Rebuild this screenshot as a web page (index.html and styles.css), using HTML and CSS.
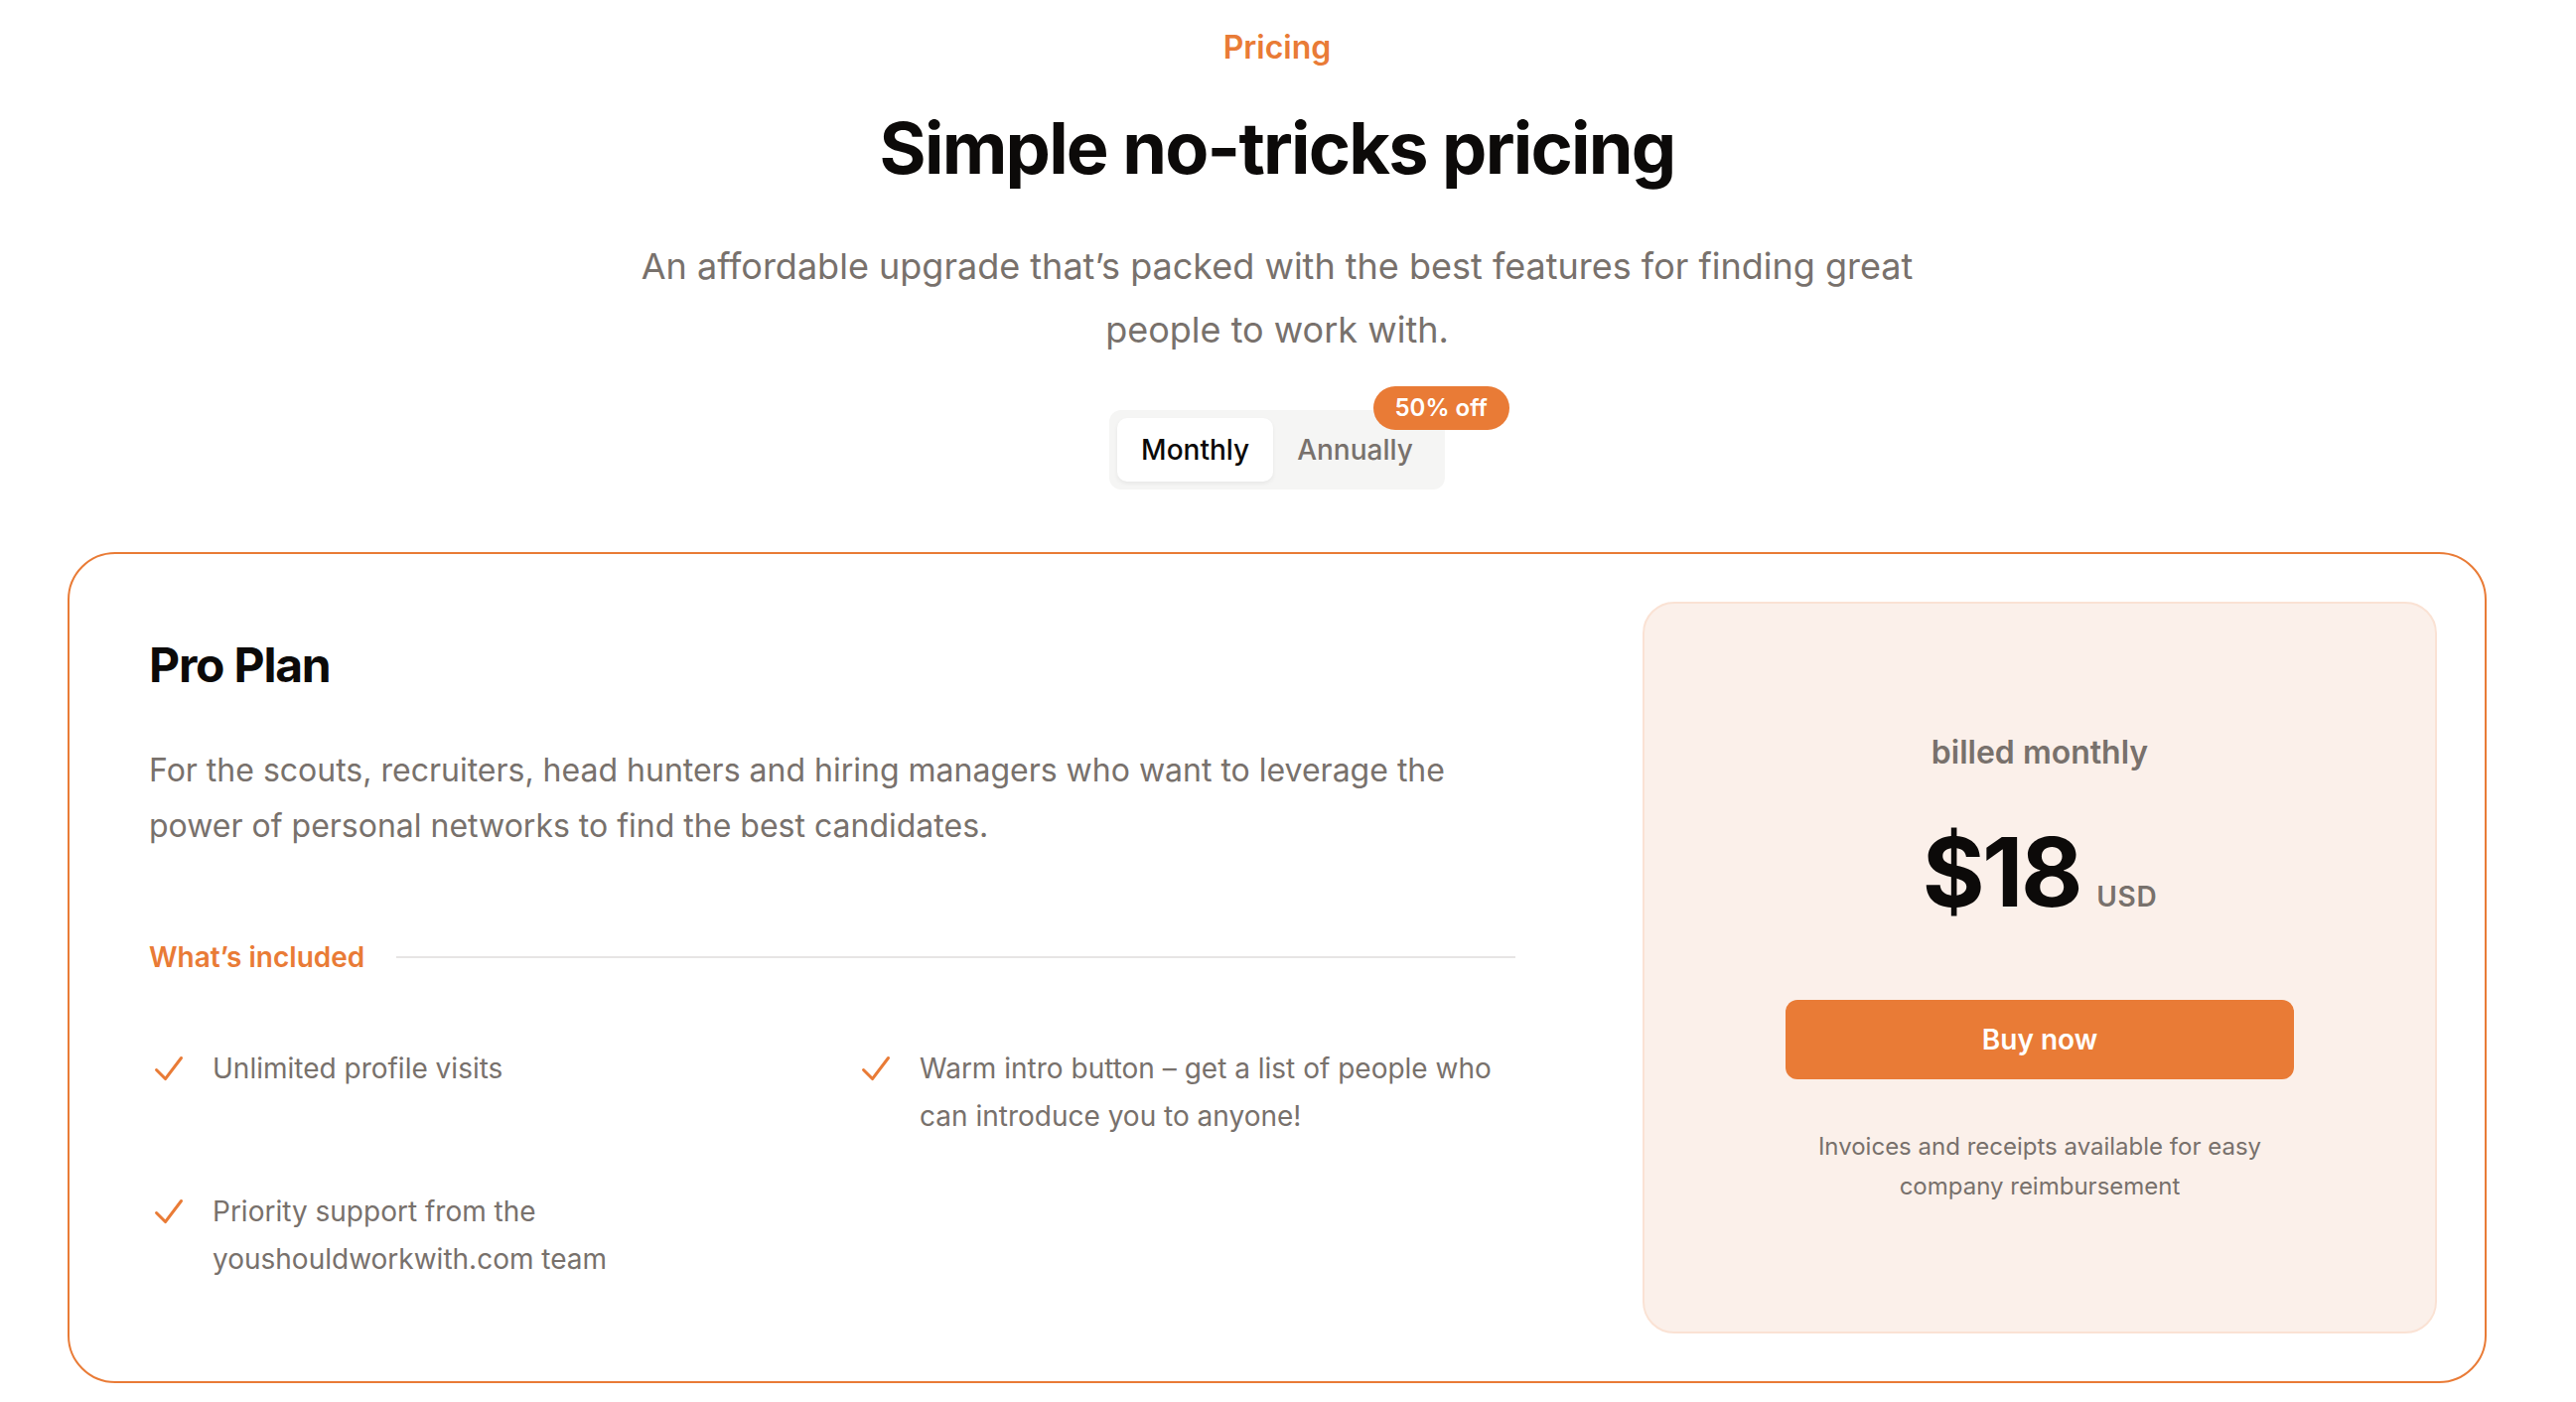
FILE: index.html
```html
<!DOCTYPE html>
<html lang="en">
<head>
<meta charset="utf-8">
<title>Pricing</title>
<link rel="stylesheet" href="styles.css">
</head>
<body>
<main class="page">
  <section class="hero">
    <p class="eyebrow">Pricing</p>
    <h1 class="title">Simple no-tricks pricing</h1>
    <p class="lead">An affordable upgrade that’s packed with the best features for finding great people to work with.</p>
    <div class="toggle-wrap">
      <div class="toggle">
        <span class="opt active">Monthly</span>
        <span class="opt">Annually</span>
        <span class="badge">50% off</span>
      </div>
    </div>
  </section>

  <section class="card">
    <div class="plan">
      <h2 class="plan-name">Pro Plan</h2>
      <p class="plan-desc">For the scouts, recruiters, head hunters and hiring managers who want to leverage the power of personal networks to find the best candidates.</p>
      <div class="included">
        <h3 class="included-label">What’s included</h3>
        <div class="included-line"></div>
      </div>
      <ul class="features">
        <li class="feature">
          <svg class="check" viewBox="0 0 20 20" fill="currentColor" aria-hidden="true"><path fill-rule="evenodd" d="M16.704 4.153a.75.75 0 01.143 1.052l-8 10.5a.75.75 0 01-1.127.075l-4.5-4.5a.75.75 0 011.06-1.06l3.894 3.893 7.48-9.817a.75.75 0 011.05-.143z" clip-rule="evenodd"/></svg>
          <span>Unlimited profile visits</span>
        </li>
        <li class="feature">
          <svg class="check" viewBox="0 0 20 20" fill="currentColor" aria-hidden="true"><path fill-rule="evenodd" d="M16.704 4.153a.75.75 0 01.143 1.052l-8 10.5a.75.75 0 01-1.127.075l-4.5-4.5a.75.75 0 011.06-1.06l3.894 3.893 7.48-9.817a.75.75 0 011.05-.143z" clip-rule="evenodd"/></svg>
          <span>Warm intro button – get a list of people who can introduce you to anyone!</span>
        </li>
        <li class="feature">
          <svg class="check" viewBox="0 0 20 20" fill="currentColor" aria-hidden="true"><path fill-rule="evenodd" d="M16.704 4.153a.75.75 0 01.143 1.052l-8 10.5a.75.75 0 01-1.127.075l-4.5-4.5a.75.75 0 011.06-1.06l3.894 3.893 7.48-9.817a.75.75 0 011.05-.143z" clip-rule="evenodd"/></svg>
          <span>Priority support from the youshouldworkwith.com team</span>
        </li>
      </ul>
    </div>
    <div class="side">
      <div class="panel">
        <div class="panel-inner">
          <p class="billed">billed monthly</p>
          <p class="price"><span class="amount">$18</span><span class="cur">USD</span></p>
          <a class="buy" href="#">Buy now</a>
          <p class="note">Invoices and receipts available for easy company reimbursement</p>
        </div>
      </div>
    </div>
  </section>
</main>
</body>
</html>
```

FILE: styles.css
```css
* {
  box-sizing: border-box;
  margin: 0;
  padding: 0;
}

body {
  margin: 0;
  background: #ffffff;
  font-family: Inter, "Noto Sans", "Liberation Sans", sans-serif;
  color: #0c0a09;
}

.page {
  width: 2572px;
  padding-top: 24px;
}

.hero {
  text-align: center;
}

.eyebrow {
  font-size: 32px;
  line-height: 48px;
  font-weight: 600;
  color: #e97b36;
}

.title {
  margin-top: 37px;
  font-size: 72px;
  line-height: 80px;
  font-weight: 700;
  letter-spacing: -0.025em;
  color: #0c0a09;
}

.lead {
  margin: 47px auto 0;
  max-width: 1344px;
  font-size: 36px;
  line-height: 64px;
  color: #78716c;
}

.toggle-wrap {
  margin-top: 49px;
  display: flex;
  justify-content: center;
}

.toggle {
  position: relative;
  display: flex;
  padding: 8px;
  background: #f5f5f4;
  border-radius: 12px;
}

.opt {
  padding: 12px 24px;
  font-size: 28px;
  line-height: 40px;
  font-weight: 500;
  color: #78716c;
  border-radius: 10px;
}

.opt.active {
  background: #ffffff;
  color: #0c0a09;
  box-shadow: 0 2px 4px rgba(0, 0, 0, 0.06);
}

.badge {
  position: absolute;
  top: -24px;
  right: -65px;
  padding: 6px 22px;
  border-radius: 999px;
  background: #e97b36;
  color: #ffffff;
  font-size: 24px;
  line-height: 32px;
  font-weight: 600;
  white-space: nowrap;
}

.card {
  margin: 63px auto 0;
  width: 2436px;
  border: 2px solid #e97b36;
  border-radius: 48px;
  display: flex;
}

.plan {
  flex: 1;
  padding: 80px;
}

.plan-name {
  font-size: 48px;
  line-height: 64px;
  font-weight: 700;
  letter-spacing: -0.025em;
  color: #0c0a09;
}

.plan-desc {
  margin-top: 46px;
  font-size: 32px;
  line-height: 56px;
  color: #78716c;
}

.included {
  margin-top: 80px;
  display: flex;
  align-items: center;
  gap: 32px;
}

.included-label {
  flex: none;
  font-size: 28px;
  line-height: 48px;
  font-weight: 600;
  color: #e97b36;
}

.included-line {
  flex: 1;
  height: 2px;
  background: #e7e5e4;
}

.features {
  margin-top: 64px;
  list-style: none;
  display: grid;
  grid-template-columns: 1fr 1fr;
  gap: 48px;
}

.feature {
  display: flex;
  gap: 24px;
  font-size: 28px;
  line-height: 48px;
  color: #78716c;
}

.check {
  flex: none;
  width: 40px;
  height: 48px;
  color: #e97b36;
}

.side {
  flex: none;
  width: 896px;
  padding: 48px;
}

.panel {
  height: 100%;
  padding: 126px 0;
  background: #fbf0ea;
  border: 2px solid #fae2d4;
  border-radius: 32px;
  display: flex;
  flex-direction: column;
  justify-content: center;
  align-items: center;
  text-align: center;
}

.panel-inner {
  width: 640px;
  padding: 0 64px;
}

.billed {
  font-size: 32px;
  line-height: 48px;
  font-weight: 600;
  color: #78716c;
}

.price {
  margin-top: 48px;
  display: flex;
  align-items: baseline;
  justify-content: center;
  gap: 16px;
}

.amount {
  font-size: 96px;
  line-height: 1;
  font-weight: 700;
  letter-spacing: -0.025em;
  color: #0c0a09;
}

.cur {
  font-size: 28px;
  line-height: 48px;
  font-weight: 600;
  letter-spacing: 0.025em;
  color: #78716c;
}

.buy {
  display: block;
  margin-top: 80px;
  padding: 16px 24px;
  background: #e97b36;
  color: #ffffff;
  border-radius: 12px;
  font-size: 28px;
  line-height: 48px;
  font-weight: 600;
  text-decoration: none;
}

.note {
  margin-top: 48px;
  font-size: 24px;
  line-height: 40px;
  color: #78716c;
}
```
